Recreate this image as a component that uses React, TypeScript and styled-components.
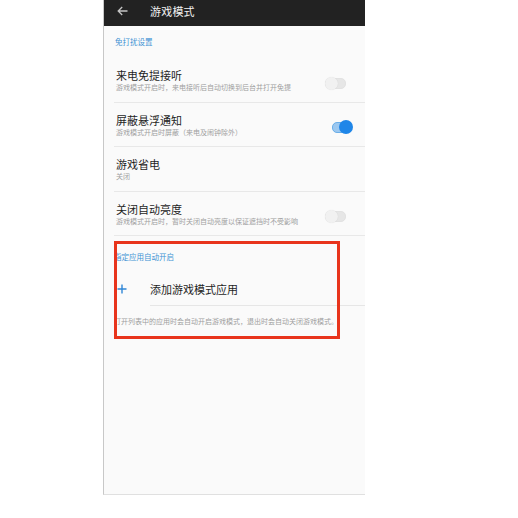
import React from "react"
import styled, { createGlobalStyle } from "styled-components"

const GlobalStyle = createGlobalStyle`
  html, body {
    margin: 0;
    padding: 0;
    background: #ffffff;
  }
  body {
    font-family: "Noto Sans CJK SC", "Noto Sans", sans-serif;
  }
`

type Setting = {
  title: string
  subtitle: string
  toggle?: "on" | "off"
}

const disturbSettings: Setting[] = [
  { title: "来电免提接听", subtitle: "游戏模式开启时，来电接听后自动切换到后台并打开免提", toggle: "off" },
  { title: "屏蔽悬浮通知", subtitle: "游戏模式开启时屏蔽（来电及闹钟除外）", toggle: "on" },
  { title: "游戏省电", subtitle: "关闭" },
  { title: "关闭自动亮度", subtitle: "游戏模式开启时，暂时关闭自动亮度以保证遮挡时不受影响", toggle: "off" },
]

export default function App() {
  return (
    <>
      <GlobalStyle />
      <Page>
        <Screen>
          <TopBar>
            <BackIcon width="11" height="10" viewBox="0 0 11 10">
              <path d="M10.5 5H1.2M5.2 1L1.2 5l4 4" fill="none" stroke="#c4c4c4" strokeWidth="1.3" />
            </BackIcon>
            <BarTitle>游戏模式</BarTitle>
          </TopBar>

          <SectionLabel>免打扰设置</SectionLabel>
          {disturbSettings.map((s) => (
            <SettingRow key={s.title}>
              <TextStack>
                <Title>{s.title}</Title>
                <Subtitle>{s.subtitle}</Subtitle>
              </TextStack>
              {s.toggle && (
                <Toggle $on={s.toggle === "on"}>
                  <Knob $on={s.toggle === "on"} />
                </Toggle>
              )}
            </SettingRow>
          ))}

          <AutoLabel>指定应用自动开启</AutoLabel>
          <AddRow>
            <PlusIcon width="10" height="10" viewBox="0 0 10 10">
              <path d="M5 0.5v9M0.5 5h9" stroke="#2f86d6" strokeWidth="1.4" />
            </PlusIcon>
            <AddText>添加游戏模式应用</AddText>
          </AddRow>
          <Footnote>打开列表中的应用时会自动开启游戏模式，退出时会自动关闭游戏模式。</Footnote>

          <Highlight />
        </Screen>
      </Page>
    </>
  )
}

const Page = styled.div`
  width: 518px;
  height: 518px;
  background: #ffffff;
  overflow: hidden;
`

const Screen = styled.div`
  position: relative;
  margin-left: 103px;
  width: 262px;
  height: 495px;
  background: #fafafa;
  border-left: 1px solid #c8c8c8;
  border-bottom: 1px solid #e0e0e0;
  box-sizing: border-box;
`

const TopBar = styled.div`
  height: 26px;
  background: #222222;
  display: flex;
  align-items: flex-start;
  padding: 5px 0 0 13px;
  box-sizing: border-box;
`

const BackIcon = styled.svg`
  display: block;
  margin-top: 1px;
`

const BarTitle = styled.div`
  margin-left: 22px;
  color: #f2f2f2;
  font-size: 11px;
  line-height: 12px;
  letter-spacing: 0.2px;
`

const SectionLabel = styled.div`
  padding: 11px 0 0 11px;
  height: 32px;
  box-sizing: border-box;
  color: #3f93d4;
  font-size: 7.5px;
  line-height: 10px;
`

const SettingRow = styled.div`
  margin-left: 10px;
  height: 44.5px;
  border-bottom: 1px solid #e8e8e8;
  box-sizing: border-box;
  display: flex;
  align-items: center;
  justify-content: space-between;
  padding: 1px 13px 0 2px;
`

const TextStack = styled.div`
  display: flex;
  flex-direction: column;
`

const Title = styled.div`
  color: #1e1e1e;
  font-size: 11px;
  line-height: 14px;
`

const Subtitle = styled.div`
  color: #a0a0a0;
  font-size: 7px;
  line-height: 10px;
  white-space: nowrap;
`

const Toggle = styled.div<{ $on: boolean }>`
  position: relative;
  width: ${(p) => (p.$on ? "18px" : "19px")};
  height: 9px;
  border-radius: 5px;
  margin-top: 6px;
  margin-right: ${(p) => (p.$on ? "0" : "6px")};
  background: ${(p) => (p.$on ? "#9cc8f0" : "#e6e6e6")};
  border: 1px solid ${(p) => (p.$on ? "#6aaee8" : "#e2e2e2")};
`

const Knob = styled.div<{ $on: boolean }>`
  position: absolute;
  top: ${(p) => (p.$on ? "-3px" : "-2px")};
  left: ${(p) => (p.$on ? "6px" : "-1px")};
  width: ${(p) => (p.$on ? "14px" : "13px")};
  height: ${(p) => (p.$on ? "14px" : "13px")};
  border-radius: 50%;
  background: ${(p) => (p.$on ? "#1f86e8" : "#f1f1f1")};
  box-shadow: ${(p) => (p.$on ? "none" : "0 0 1px rgba(0,0,0,0.12)")};
`

const AutoLabel = styled.div`
  padding: 16px 0 0 10px;
  height: 36px;
  box-sizing: border-box;
  color: #3f93d4;
  font-size: 7.5px;
  line-height: 10px;
`

const AddRow = styled.div`
  height: 34px;
  display: flex;
  align-items: center;
  padding-left: 13px;
  position: relative;
  &::after {
    content: "";
    position: absolute;
    left: 46px;
    right: 0;
    bottom: 0;
    border-bottom: 1px solid #e6e6e6;
  }
`

const PlusIcon = styled.svg`
  display: block;
`

const AddText = styled.div`
  margin-left: 23px;
  color: #1e1e1e;
  font-size: 11px;
  line-height: 14px;
`

const Footnote = styled.div`
  padding: 10px 0 0 10px;
  color: #9e9e9e;
  font-size: 7px;
  line-height: 10px;
  white-space: nowrap;
`

const Highlight = styled.div`
  position: absolute;
  left: 10px;
  top: 241px;
  width: 226px;
  height: 98px;
  border: 3px solid #e8341c;
  box-sizing: border-box;
  pointer-events: none;
`
